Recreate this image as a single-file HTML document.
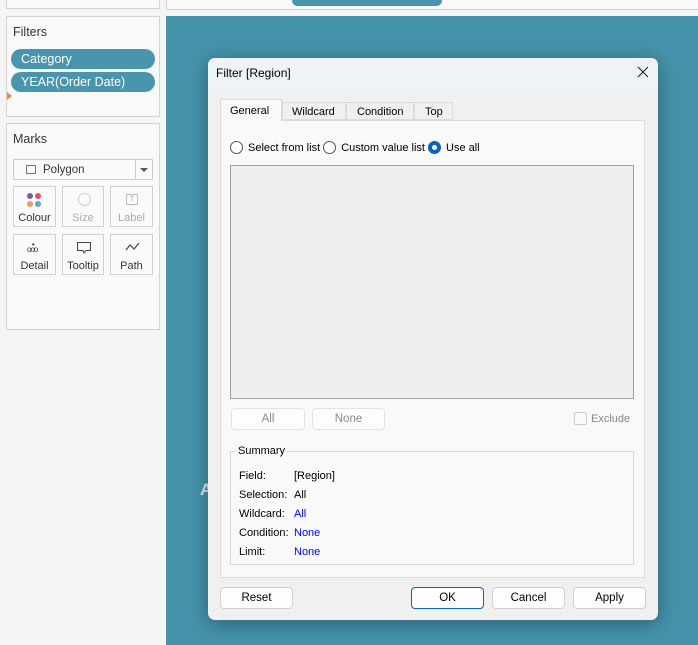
<!DOCTYPE html>
<html><head><style>
*{box-sizing:border-box;margin:0;padding:0}
body{width:698px;height:645px;overflow:hidden;background:#f5f5f5;font-family:"Liberation Sans",sans-serif;font-size:11px;color:#000;position:relative}
.a{position:absolute}
.box{position:absolute;background:#f9f9f9;border:1px solid #d4d4d4}
.pill{position:absolute;left:11px;width:144px;height:20px;border-radius:10px;background:#4a95ae;color:#fff;font-size:12.5px;padding:3px 10px}
.mk{position:absolute;width:43px;height:41px;border:1px solid #d0d0d0;background:#fafafa;text-align:center;font-size:11px;color:#333}
.mk span{position:absolute;left:0;right:0;bottom:2px}
.btn{position:absolute;height:22px;border:1px solid #d0d0d0;border-radius:4px;background:#fdfdfd;text-align:center;line-height:20px;font-size:11.5px}
.rad{display:inline-block;width:13px;height:13px;border:1px solid #555;border-radius:50%;vertical-align:-3px;margin-right:5px;background:#fff}
</style></head><body>
<div class="box" style="left:6px;top:-1px;width:154px;height:10px"></div>
<div class="box" style="left:166px;top:-1px;width:540px;height:11px"></div>
<div class="a" style="left:292px;top:-5px;width:150px;height:11px;border-radius:6px;background:#4a95ae"></div>
<div class="box" style="left:6px;top:16px;width:154px;height:101px"></div>
<div class="a" style="left:13px;top:25px;font-size:12.5px;color:#333">Filters</div>
<div class="pill" style="top:49px">Category</div>
<div class="pill" style="top:72px">YEAR(Order Date)</div>
<div class="a" style="left:7px;top:92px;width:0;height:0;border-top:4px solid transparent;border-bottom:4px solid transparent;border-left:5px solid #e88a3a"></div>
<div class="box" style="left:6px;top:123px;width:154px;height:207px"></div>
<div class="a" style="left:13px;top:132px;font-size:12.5px;color:#333">Marks</div>
<div class="a" style="left:13px;top:159px;width:140px;height:21px;border:1px solid #ccc;background:#fafafa">
 <div class="a" style="left:12px;top:5px;width:10px;height:9px;border:1px solid #777"></div>
 <div class="a" style="left:29px;top:4px;color:#333;font-size:11.5px">Polygon</div>
 <div class="a" style="left:121px;top:0;height:19px;border-left:1px solid #ccc;width:18px"></div>
 <div class="a" style="left:126px;top:8px;border-left:4px solid transparent;border-right:4px solid transparent;border-top:4px solid #555"></div>
</div>
<div class="mk" style="left:13px;top:186px"><div class="a" style="left:13px;top:6px;width:15px;height:14px">
<i class="a" style="left:0;top:0;width:6px;height:6px;border-radius:50%;background:#7b5d92"></i><i class="a" style="left:8px;top:0;width:6px;height:6px;border-radius:50%;background:#e05566"></i><i class="a" style="left:0;top:8px;width:6px;height:6px;border-radius:50%;background:#eb9a60"></i><i class="a" style="left:8px;top:8px;width:6px;height:6px;border-radius:50%;background:#6f9fd0"></i></div><span>Colour</span></div>
<div class="mk" style="left:62px;top:186px;width:42px;color:#aaa"><div class="a" style="left:15px;top:6px;width:13px;height:13px;border:1px solid #ccc;border-radius:50%"></div><span>Size</span></div>
<div class="mk" style="left:110px;top:186px;color:#aaa"><div class="a" style="left:15px;top:7px;width:12px;height:11px;border:1px solid #bbb;font-size:7px;line-height:9px">T</div><span>Label</span></div>
<div class="mk" style="left:13px;top:234px"><div class="a" style="left:13px;top:7px;font-size:8px;line-height:5px;letter-spacing:-1px">&nbsp;•<br>ooo</div><span>Detail</span></div>
<div class="mk" style="left:62px;top:234px;width:42px"><svg class="a" style="left:14px;top:7px" width="14" height="12"><path d="M0.5 0.5H13.5V8.5H9L7 11L6 8.5H0.5Z" fill="none" stroke="#444"/></svg><span>Tooltip</span></div>
<div class="mk" style="left:110px;top:234px"><svg class="a" style="left:14px;top:7px" width="15" height="10"><path d="M1 8 L5 3 L9 7 L14 1" fill="none" stroke="#444" stroke-width="1.2"/></svg><span>Path</span></div>

<div class="a" style="left:166px;top:16px;width:532px;height:629px;background:#4593ab"></div>
<div class="a" style="left:200px;top:480px;color:#d9e9ee;font-size:17px;font-weight:bold">A</div>

<div class="a" style="left:208px;top:58px;width:450px;height:562px;border-radius:7px;background:#f0f0f0;box-shadow:0 4px 20px rgba(0,0,0,.35);overflow:hidden">
 <div class="a" style="left:0;top:0;width:450px;height:31px;background:#eef3f7"></div>
 <div class="a" style="left:8px;top:8px;font-size:12px">Filter [Region]</div>
 <svg class="a" style="left:429px;top:8px" width="12" height="12"><path d="M1 1L11 11M11 1L1 11" stroke="#222" stroke-width="1.1"/></svg>
 <div class="a" style="left:12px;top:62px;width:425px;height:458px;background:#f9f9f9;border:1px solid #dcdcdc"></div>
 <div class="a" style="left:12px;top:41px;width:62px;height:22px;background:#f9f9f9;border:1px solid #dcdcdc;border-bottom:none;padding:5px 9px">General</div>
 <div class="a" style="left:74px;top:44px;width:64px;height:18px;border:1px solid #dcdcdc;padding:3px 9px">Wildcard</div>
 <div class="a" style="left:138px;top:44px;width:68px;height:18px;border:1px solid #dcdcdc;padding:3px 10px">Condition</div>
 <div class="a" style="left:206px;top:44px;width:39px;height:18px;border:1px solid #dcdcdc;padding:3px 10px">Top</div>
 <div class="a" style="left:22px;top:83px;font-size:11px"><span class="rad"></span>Select from list <span class="rad"></span>Custom value list <span class="rad" style="border:4px solid #0a63c0;background:#fff"></span>Use all</div>
 <div class="a" style="left:22px;top:107px;width:404px;height:234px;background:#efefef;border:1px solid #a0a0a0"></div>
 <div class="btn" style="left:23px;top:350px;width:74px;color:#888;border-color:#e2e2e2">All</div>
 <div class="btn" style="left:104px;top:350px;width:73px;color:#888;border-color:#e2e2e2">None</div>
 <div class="a" style="left:366px;top:354px;width:13px;height:13px;border:1px solid #ccc;border-radius:2px"></div>
 <div class="a" style="left:383px;top:355px;color:#888">Exclude</div>
 <div class="a" style="left:22px;top:393px;width:404px;height:114px;border:1px solid #d8d8d8"></div>
 <div class="a" style="left:28px;top:387px;background:#f9f9f9;padding:0 2px">Summary</div>
 <div class="a" style="left:31px;top:409px;line-height:19px">Field:<br>Selection:<br>Wildcard:<br>Condition:<br>Limit:</div>
 <div class="a" style="left:86px;top:409px;line-height:19px">[Region]<br>All<br><span style="color:#00f">All</span><br><span style="color:#00f">None</span><br><span style="color:#00f">None</span></div>
 <div class="btn" style="left:12px;top:529px;width:73px">Reset</div>
 <div class="btn" style="left:203px;top:529px;width:73px;border-color:#0a63c0">OK</div>
 <div class="btn" style="left:284px;top:529px;width:73px">Cancel</div>
 <div class="btn" style="left:365px;top:529px;width:73px">Apply</div>
</div>
</body></html>
